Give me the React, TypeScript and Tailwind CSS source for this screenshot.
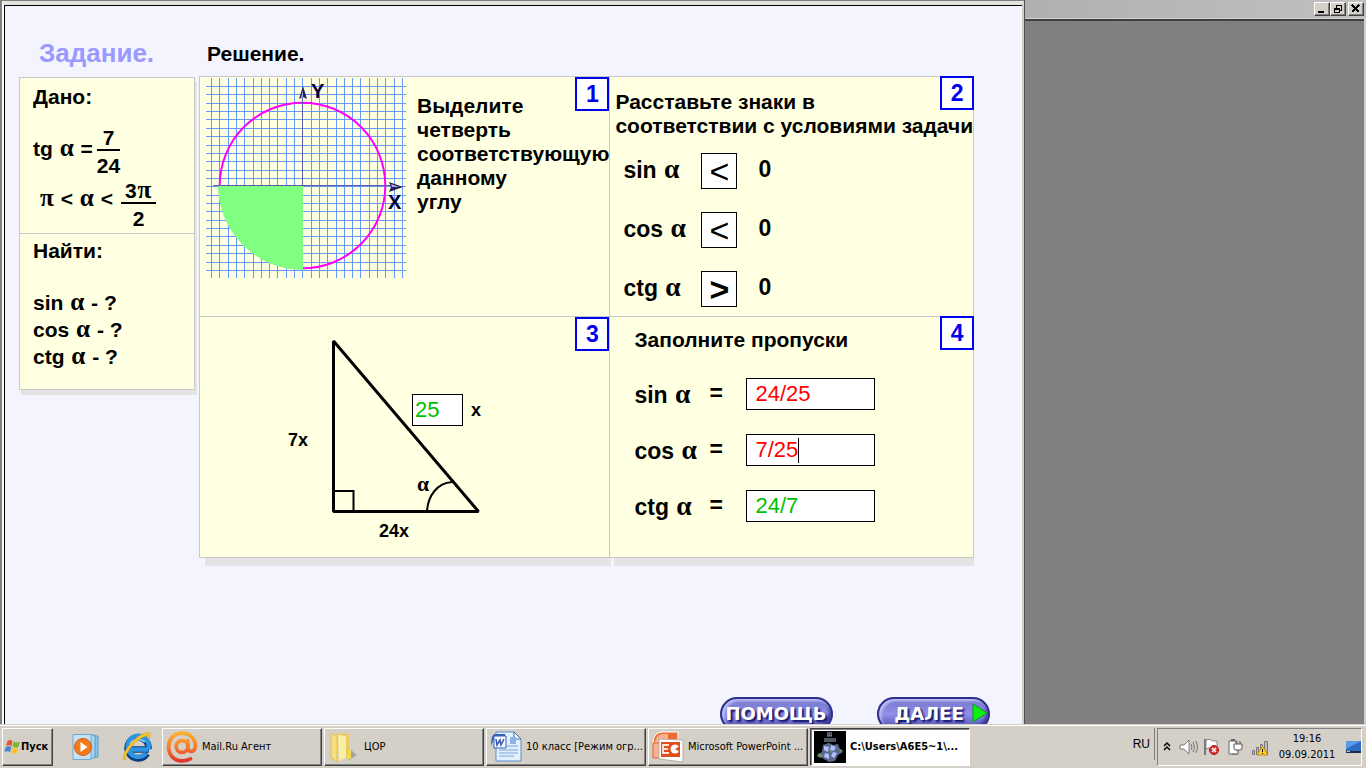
import type { ReactNode } from 'react';

const signs = [
  { name: 'sin', sign: '<', bold: false },
  { name: 'cos', sign: '<', bold: false },
  { name: 'ctg', sign: '>', bold: true },
];

const answers = [
  { name: 'sin', value: '24/25', correct: false },
  { name: 'cos', value: '7/25', correct: false, caret: true },
  { name: 'ctg', value: '24/7', correct: true },
];

const gridColumns = Array.from({ length: 24 }, (_, i) => 5 + Math.round(i * 8.3));
const gridRows = Array.from({ length: 23 }, (_, i) => 8 + Math.round(i * 8.36));

function Greek({ children }: { children: ReactNode }) {
  return (
    <span className="px-px font-['Liberation_Serif',serif] text-[120%] leading-none">
      {children}
    </span>
  );
}

function Fraction({ top, bottom }: { top: ReactNode; bottom: ReactNode }) {
  return (
    <span className="inline-flex flex-col text-center">
      <span className="border-b-2 border-black px-1 leading-[22px]">{top}</span>
      <span className="leading-[30px]">{bottom}</span>
    </span>
  );
}

function Step({
  number,
  edge = false,
  className = '',
  children,
}: {
  number: number;
  edge?: boolean;
  className?: string;
  children: ReactNode;
}) {
  return (
    <section className={`relative border-r border-b border-[#c8c8c8] ${className}`}>
      {children}
      <span
        className={`absolute flex h-[34px] w-[34px] items-center justify-center border-2 border-[#0000f0] bg-white text-[23px] text-[#0000f0] ${
          edge ? '-top-px -right-px' : 'top-0 right-0'
        }`}
      >
        {number}
      </span>
    </section>
  );
}

function UnitCircle() {
  return (
    <svg className="h-[200px] w-[200px] shrink-0" viewBox="0 0 200 200">
      <g stroke="#6699ff" shapeRendering="crispEdges">
        {gridColumns.map((x) => (
          <line key={x} x1={x + 0.5} x2={x + 0.5} y1="0" y2="200" />
        ))}
        {gridRows.map((y) => (
          <line key={y} x1="0" x2="200" y1={y + 0.5} y2={y + 0.5} />
        ))}
      </g>
      <circle cx="96.5" cy="107.5" r="82.8" fill="none" stroke="#ff00ff" strokeWidth="2" />
      <path d="M97 107V192A85 85 0 0 1 12 107Z" fill="#80ff80" />
      <g stroke="#5c5ca8" shapeRendering="crispEdges">
        <line x1="7" x2="190" y1="107.5" y2="107.5" />
        <line x1="96.5" x2="96.5" y1="18" y2="107" />
      </g>
      <path d="M97 8l4 13-4-2-4 2z" fill="#202058" />
      <path d="M97 12v7l-2 1z" fill="#b0b0dc" />
      <path d="M197 109l-14-5 2 5-2 5z" fill="#202058" />
      <path d="M193 109h-7l-1-3z" fill="#b0b0dc" />
      <g fill="#00003c" fontSize="20" fontWeight="bold" fontFamily="Liberation Sans">
        <text x="105" y="20">Y</text>
        <text x="182" y="131">X</text>
      </g>
    </svg>
  );
}

function Triangle() {
  return (
    <div className="relative mt-3 ml-20 h-[220px] w-[220px] text-[18px] leading-[20px]">
      <svg className="h-full w-full" viewBox="0 0 220 220" fill="none" stroke="#000">
        <path d="M53.5 12v170.500h145z" strokeWidth="3" strokeLinejoin="bevel" />
        <path d="M54 162h19.500V182" strokeWidth="2" />
        <path d="M147 182c1-15 10-28 25-29" strokeWidth="2" />
      </svg>
      <span className="absolute top-[101px] left-2">7x</span>
      <span className="absolute top-48 left-[99px]">24x</span>
      <span className="absolute top-[145px] left-[136px]">
        <Greek>α</Greek>
      </span>
      <label className="absolute top-[65px] left-[132px] flex items-center gap-2">
        <input
          className="h-8 w-[51px] border border-black bg-white pl-[2px] text-[22px] font-normal text-[#00c000] outline-none"
          defaultValue="25"
        />
        x
      </label>
    </div>
  );
}

function PillButton({ children }: { children: ReactNode }) {
  return (
    <button className="relative h-[34px] w-[113px] rounded-full border-2 border-[#30308c] bg-linear-to-b from-[#7474cc] via-[#9090e8] to-[#5050b4] font-['DejaVu_Sans',sans-serif] text-[18px] leading-[26px] font-bold text-white shadow-[inset_2px_2px_3px_#c4c4f8,inset_-2px_-2px_3px_#3c3ca0] [text-shadow:2px_2px_2px_#101060]">
      {children}
    </button>
  );
}

function TaskButton({
  icon,
  active = false,
  children,
}: {
  icon: ReactNode;
  active?: boolean;
  children: ReactNode;
}) {
  return (
    <button
      className={`flex h-[38px] w-40 items-center gap-1 border pl-[3px] text-left whitespace-nowrap ${
        active
          ? 'border-t-[#404040] border-r-white border-b-white border-l-[#404040] bg-white font-bold shadow-[inset_1px_1px_0_#808080]'
          : 'border-t-white border-r-[#404040] border-b-[#404040] border-l-white shadow-[inset_-1px_-1px_0_#808080]'
      }`}
    >
      {icon}
      <span>{children}</span>
    </button>
  );
}

function WindowButton({ label, children }: { label: string; children: ReactNode }) {
  return (
    <button
      aria-label={label}
      className="h-[14px] w-4 border border-t-white border-r-[#404040] border-b-[#404040] border-l-white bg-[#d4d0c8] shadow-[inset_-1px_-1px_0_#808080]"
    >
      <svg className="h-3 w-[14px]" viewBox="0 0 14 12" fill="none" stroke="#000" shapeRendering="crispEdges">
        {children}
      </svg>
    </button>
  );
}

function WindowsFlag() {
  return (
    <svg className="h-4 w-[17px]" viewBox="0 0 16 16">
      <path d="M3 2q3-2 5 0L7 7Q4 5.500 1.500 7z" fill="#e8562a" />
      <path d="M9 2.500q3 2 6.500 0L14 8q-3 1.500-6-.5z" fill="#7cb82f" />
      <path d="M1.300 8q3-1.500 5.500 0L5.500 13Q3 11.500 0 13z" fill="#3f86d8" />
      <path d="M7.600 8.500q3 2 6 .500l-1.300 5q-3 1.500-6-.5z" fill="#fbc02d" />
    </svg>
  );
}

function PlayerIcon() {
  return (
    <svg className="h-7 w-7" viewBox="0 0 28 28">
      <path d="M17 3h9v21h-9z" fill="#8fc3e4" stroke="#5a9cc8" />
      <path d="M14 2h9v23h-9z" fill="#a9d4ee" stroke="#5a9cc8" />
      <path d="M1 1.500h18v25H1z" fill="#c4e2f4" stroke="#6daad2" />
      <circle cx="11" cy="14" r="8.500" fill="#f47a1c" stroke="#d85c0c" />
      <path d="M8.500 9l7 5-7 5z" fill="#fff" />
    </svg>
  );
}

function ExplorerIcon() {
  return (
    <svg className="h-8 w-8" viewBox="0 0 32 32" fill="none">
      <path d="M28 18.500H10M26 22.500A10.500 10.500 0 1 1 27.500 18" stroke="#0c3c80" strokeWidth="6.500" />
      <path d="M27.500 18.500H10M25 22.500A10.500 10.500 0 1 1 27.500 18" stroke="#2c94e0" strokeWidth="4.500" />
      <path d="M9 13a10 10 0 0 1 15-2" stroke="#7cd0f8" strokeWidth="2" />
      <path d="M5 29C-3 31 6 13 18 5c8-5 14-5 10 3 0-5-5-3-9 0C10 14 3 25 5 29z" fill="#f4c42c" stroke="#d89c18" strokeWidth=".5" />
    </svg>
  );
}

function MailIcon() {
  return (
    <svg className="h-8 w-8 shrink-0" viewBox="0 0 30 30" fill="none" strokeLinecap="round">
      <defs>
        <linearGradient id="mail" x1="0" y1="0" x2="0" y2="30" gradientUnits="userSpaceOnUse">
          <stop offset="0" stopColor="#fdb52c" />
          <stop offset=".5" stopColor="#f77d2c" />
          <stop offset="1" stopColor="#dc2c2c" />
        </linearGradient>
      </defs>
      <circle cx="15" cy="14.500" r="5.500" stroke="url(#mail)" strokeWidth="3.500" />
      <path
        d="M20.500 9v7q0 3 3 3 4 0 4-5C27.500 7 22 2 15 2S2.500 7 2.500 15 8 28 15 28q5 0 8-2"
        stroke="url(#mail)"
        strokeWidth="3.500"
      />
    </svg>
  );
}

function FolderIcon() {
  return (
    <svg className="h-8 w-8 shrink-0" viewBox="0 0 32 32">
      <path d="M20 30l9-6-6-5z" fill="#aaa59a" />
      <path d="M8 2l13 1v23l-9 4z" fill="#e8cc62" />
      <path d="M10 4l8 1v22l-7 3z" fill="#f8eea8" />
      <path d="M3 2l6 4v25l-6-4z" fill="#f6de82" stroke="#e2c050" />
      <path d="M20 19h3v9h-4z" fill="#f4d850" />
    </svg>
  );
}

function WordIcon() {
  return (
    <svg className="h-8 w-8 shrink-0" viewBox="0 0 32 32">
      <path d="M6 1h18l7 7v22H6z" fill="#e4effc" stroke="#5b8fd0" />
      <path d="M24 1v7h7z" fill="#fff" stroke="#3b6cb0" />
      <path d="M20 6h6v7h-6z" fill="#8cb4e8" />
      <path d="M17 15h11M9 19h19M9 22h19M9 25h15" stroke="#78a4dc" />
      <path d="M1 15Q1 3 5 3h10v2H5z" fill="#3260b8" />
      <path d="M4 5h12v12H4z" fill="#f6f9ff" stroke="#3260b8" />
      <path d="M6 8l1 6 3-5 1 5 3-6" fill="none" stroke="#3858b0" strokeWidth="1.500" />
    </svg>
  );
}

function PowerPointIcon() {
  return (
    <svg className="h-8 w-8 shrink-0" viewBox="0 0 32 32">
      <path d="M10 1h16v11H1Q1 2 10 1z" fill="#f06a34" stroke="#fff" />
      <path d="M10 3h6v8H3q1-7 7-8z" fill="#fbb090" />
      <path d="M1 12h8v15H1z" fill="#fbb090" stroke="#e8602c" />
      <path d="M7 8l24 1v22L7 28z" fill="#fff" stroke="#b8aaa4" />
      <path d="M9 11h19v15H9z" fill="#e14e18" />
      <path d="M17 14h-6v8h6M11 18h5" fill="none" stroke="#ffe8dc" strokeWidth="1.800" />
      <circle cx="23" cy="18" r="4.500" fill="#fff" />
      <path d="M23 18l5-3v6z" fill="#e14e18" />
    </svg>
  );
}

function AppIcon() {
  return (
    <svg className="h-8 w-8 shrink-0 bg-black" viewBox="0 0 32 32">
      <path d="M13 1h5v4h-5zM10 7h12v4H10z" fill="#505868" />
      <path d="M13 5h5M14 12v3" stroke="#8890a0" />
      <path d="M9 14l6-2 4 2 5-1 2 6 3 2-5 3-3 6-6 1-5-3-6-4 4-3z" fill="#596a8c" />
      <path d="M10 15l5 1-1 5-4-2zM17 14l5 2-2 4-4-1zM11 22l4 1v5l-5-2zM19 21l4 1-3 5-3-2z" fill="#b4bcfc" />
      <path d="M5 22l4 2-2 3-4-2zM25 17l4 3-3 1zM15 18l3 2-1 3" fill="#6e9070" />
    </svg>
  );
}

function TrayIcons() {
  return (
    <svg className="h-5 w-[106px]" viewBox="0 0 106 20" fill="none">
      <path d="M1 9l3-3 3 3M1 13l3-3 3 3" stroke="#000" strokeWidth="1.500" />
      <path d="M17 8h4l5-5v14l-5-5h-4z" fill="#fff" stroke="#777" />
      <path d="M28 7q2 3 0 6M30 5q3 5 0 10M32.500 4q4 6 0 12" stroke="#777" />
      <path d="M42 2v16" stroke="#777" strokeWidth="2" />
      <path d="M43 3q4-2 7 1h4v8h-5q-3-2-6 0z" fill="#fff" stroke="#888" />
      <circle cx="51" cy="13" r="4.500" fill="#e03030" stroke="#a01818" />
      <path d="M49 11l4 4M53 11l-4 4" stroke="#fff" strokeWidth="1.500" />
      <path d="M66 4h8v13h-8z" fill="#fff" stroke="#666" />
      <path d="M68 3h4" stroke="#666" strokeWidth="2" />
      <path d="M71 7h8v4q0 2-2 2h-4q-2 0-2-2zM73 7V4M77 7V4M75 13v4H69" fill="#fff" stroke="#555" />
      <path d="M89.500 13.500h2v4h-2zM93.500 10.500h2v7h-2zM97.500 7.500h2v10h-2zM101.500 4.500h3v13h-3z" fill="#bbb" stroke="#777" />
      <path d="M99.500 9l5.500 9H94z" fill="#fcd22c" stroke="#c08a10" />
      <path d="M99.500 12v3M99.500 16v1" stroke="#000" />
    </svg>
  );
}

export default function App() {
  return (
    <div className="flex h-screen flex-col overflow-hidden bg-[#808080] font-['Liberation_Sans',Arial,sans-serif] text-black">
      <div className="flex min-h-0 flex-1">
        <div className="flex w-3/4 border-t border-r border-l-2 border-[#808080] border-r-[#505050]">
          <div className="flex w-full border-t-4 border-r-2 border-l-2 border-[#d4d0c8] border-t-[#e4e2de] border-l-white">
            <main className="flex w-full flex-col border-t border-l border-black bg-[#f4f4ff] font-bold">
              <div className="flex gap-1 pr-12 pl-[14px]">
                <aside className="w-44 shrink-0">
                  <h2 className="h-[71px] pt-8 pl-5 text-[26px] leading-[30px] text-[#9999ff]">Задание.</h2>
                  <div className="border border-[#c8c8c8] bg-[#ffffe1] text-[21px] shadow-[2px_5px_0_#e4e4e4]">
                    <div className="h-[156px] border-b border-[#c8c8c8] pt-[7px] pl-[13px] leading-[24px]">
                      <h3>Дано:</h3>
                      <div className="mt-[18px] flex items-start gap-1">
                        <span className="pt-2">
                          tg <Greek>α</Greek> =
                        </span>
                        <Fraction top="7" bottom="24" />
                      </div>
                      <div className="-mt-1 flex items-start gap-2 pl-[6px]">
                        <span className="pt-2">
                          <Greek>π</Greek> &lt; <Greek>α</Greek> &lt;
                        </span>
                        <Fraction
                          top={
                            <>
                              3<Greek>π</Greek>
                            </>
                          }
                          bottom="2"
                        />
                      </div>
                    </div>
                    <div className="h-[155px] pt-[5px] pl-[13px]">
                      <h3 className="leading-[24px]">Найти:</h3>
                      <ul className="mt-[26px] leading-[27px]">
                        {signs.map(({ name }) => (
                          <li key={name}>
                            {name} <Greek>α</Greek> - ?
                          </li>
                        ))}
                      </ul>
                    </div>
                  </div>
                </aside>

                <div className="min-w-0 flex-1">
                  <h2 className="h-[70px] pt-9 pl-2 text-[21px] leading-[24px]">Решение.</h2>
                  <div className="grid grid-cols-[411fr_363fr] grid-rows-[240px_241px] border-t border-l border-[#c8c8c8] bg-[#ffffe1] text-[21px] leading-[24px]">
                    <Step number={1} className="flex gap-[11px] pt-px pl-[6px]">
                      <UnitCircle />
                      <p className="pt-4">
                        Выделите
                        <br />
                        четверть
                        <br />
                        соответствующую
                        <br />
                        данному
                        <br />
                        углу
                      </p>
                    </Step>

                    <Step number={2} edge className="pt-[13px] pl-[5px]">
                      <p className="whitespace-nowrap">
                        Расставьте знаки в
                        <br />
                        соответствии с условиями задачи
                      </p>
                      <div className="mt-[15px] flex flex-col gap-[23px] pl-2 text-[23px]">
                        {signs.map(({ name, sign, bold }) => (
                          <div key={name} className="flex h-9 items-center">
                            <span className="w-[78px] pb-1">
                              {name} <Greek>α</Greek>
                            </span>
                            <button
                              className={`h-9 w-9 border border-black bg-white text-[34px] leading-[34px] ${
                                bold ? 'font-bold' : 'font-normal'
                              }`}
                            >
                              {sign}
                            </button>
                            <span className="pb-1 pl-[21px]">0</span>
                          </div>
                        ))}
                      </div>
                    </Step>

                    <Step number={3}>
                      <Triangle />
                    </Step>

                    <Step number={4} edge className="pt-[11px] pl-6">
                      <h3>Заполните пропуски</h3>
                      <div className="mt-[26px] flex flex-col gap-6 text-[23px]">
                        {answers.map(({ name, value, correct, caret }) => (
                          <label key={name} className="relative flex h-8 items-center">
                            <span className="w-[75px]">
                              {name} <Greek>α</Greek>
                            </span>
                            <span className="w-[37px] pb-[2px]">=</span>
                            <input
                              className={`h-8 w-[129px] border border-black bg-white pl-2 text-[22px] font-normal outline-none ${
                                correct ? 'text-[#00c000]' : 'text-[#ff0000]'
                              }`}
                              defaultValue={value}
                            />
                            {caret && <span className="absolute top-1 left-[164px] h-[25px] w-px bg-black" />}
                          </label>
                        ))}
                      </div>
                    </Step>
                  </div>
                  <div className="grid grid-cols-[53fr_47fr] gap-[3px] pl-[6px]">
                    <div className="h-2 bg-[#e4e4e4]" />
                    <div className="h-2 bg-[#e4e4e4]" />
                  </div>
                </div>
              </div>

              <div className="mt-auto flex h-[27px] items-start justify-end gap-11 overflow-hidden pr-8">
                <PillButton>ПОМОЩЬ</PillButton>
                <PillButton>
                  <span className="pr-2">ДАЛЕЕ</span>
                  <svg className="absolute top-1 right-0 h-5 w-4" viewBox="0 0 16 20">
                    <path d="M1 1l14 9-14 9z" fill="#10f010" stroke="#0a9a20" />
                  </svg>
                </PillButton>
              </div>
            </main>
          </div>
        </div>

        <div className="flex flex-1 flex-col">
          <div className="flex h-[18px] items-start justify-end bg-linear-to-r from-[#b0b0b0] to-[#c0c0c0] pt-[2px] pr-[2px]">
            <WindowButton label="Свернуть">
              <path d="M3 9h6" strokeWidth="2" />
            </WindowButton>
            <WindowButton label="Восстановить">
              <path d="M5.500 5V2.500h5v5H9M5 2h6M3.500 5.500h5v4h-5zM3 6h6" />
            </WindowButton>
            <span className="w-[2px]" />
            <WindowButton label="Закрыть">
              <path d="M3 2l7 7M10 2L3 9" strokeWidth="2" />
            </WindowButton>
          </div>
          <div className="flex-1 border-t border-r-2 border-[#d4d0c8] shadow-[inset_0_2px_0_#404040]" />
        </div>
      </div>

      <footer className="flex h-11 shrink-0 items-start border-t border-[#d4d0c8] bg-[#d4d0c8] pt-[3px] pr-1 pl-[2px] font-['DejaVu_Sans_Condensed','DejaVu_Sans',sans-serif] text-[11px] leading-[16px] shadow-[inset_0_1px_0_#fff]">
        <button className="flex h-[38px] w-[51px] items-center border border-t-white border-r-[#404040] border-b-[#404040] border-l-white pl-px font-bold shadow-[inset_-1px_-1px_0_#808080]">
          <WindowsFlag />
          Пуск
        </button>
        <div className="flex h-[38px] w-[109px] items-center gap-[21px] pl-[19px]">
          <PlayerIcon />
          <ExplorerIcon />
        </div>
        <nav className="flex gap-[2px]">
          <TaskButton icon={<MailIcon />}>Mail.Ru Агент</TaskButton>
          <TaskButton icon={<FolderIcon />}>ЦОР</TaskButton>
          <TaskButton icon={<WordIcon />}>10 класс [Режим огр...</TaskButton>
          <TaskButton icon={<PowerPointIcon />}>Microsoft PowerPoint ...</TaskButton>
          <TaskButton icon={<AppIcon />} active>
            C:\Users\A6E5~1\...
          </TaskButton>
        </nav>
        <span className="ml-auto flex h-8 items-center border-r border-[#808080] pr-1 font-['Liberation_Sans',sans-serif] text-[12px]">
          RU
        </span>
        <div className="ml-[2px] flex h-[38px] w-[205px] items-center border border-t-[#808080] border-r-white border-b-white border-l-[#808080] pl-[5px]">
          <TrayIcons />
          <div className="flex-1 text-center leading-[16px]">
            19:16
            <br />
            09.09.2011
          </div>
          <svg className="h-4 w-4 shrink-0" viewBox="0 0 16 16">
            <path d="M1 2h15v10H1z" fill="#2c6cc4" />
            <path d="M1 2h15L1 10z" fill="#5a9ce4" />
            <path d="M1 12h15v2H1z" fill="#182c50" />
            <path d="M2 12h3v1H2z" fill="#f0d040" />
          </svg>
        </div>
      </footer>
    </div>
  );
}
